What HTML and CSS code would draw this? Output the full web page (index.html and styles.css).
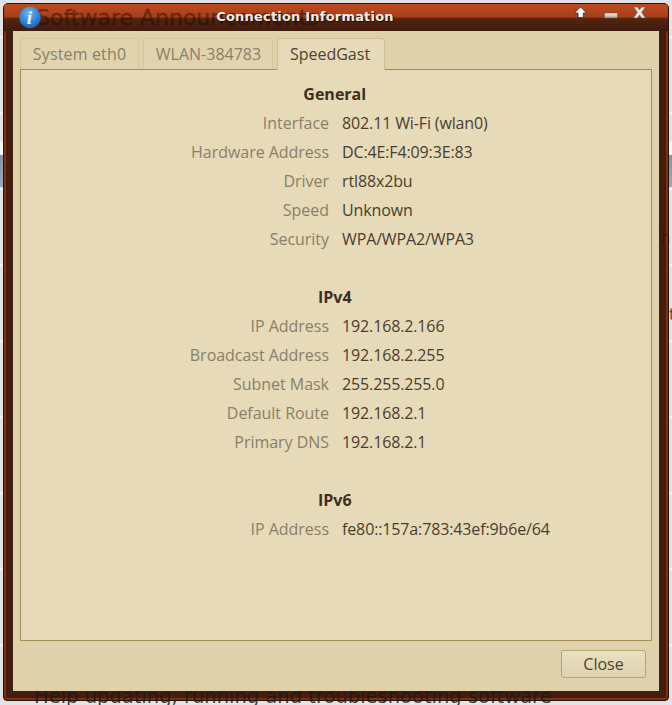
FILE: index.html
```html
<!DOCTYPE html>
<html lang="en">
<head>
<meta charset="utf-8">
<title>Connection Information</title>
<link rel="stylesheet" href="styles.css">
</head>
<body>
<div class="desk-band"></div>
<div class="ghost ghost-top">Software Announcements</div>
<div class="ghost ghost-bottom">Help updating, running and troubleshooting software</div>
<div class="ghost ghost-h">h</div>
<div class="ghost ghost-t">t</div>
<div class="window">
  <header class="titlebar">
    <div class="title-side title-left">
      <svg class="app-icon" width="24" height="24" viewBox="0 0 24 24">
        <defs>
          <radialGradient id="ball" cx="45%" cy="30%" r="75%">
            <stop offset="0" stop-color="#6fb8f0"/>
            <stop offset="0.6" stop-color="#2f84d8"/>
            <stop offset="1" stop-color="#1a58b0"/>
          </radialGradient>
        </defs>
        <circle cx="12" cy="12.500" r="10.700" fill="url(#ball)"/>
        <text x="11.500" y="18.500" text-anchor="middle" class="app-icon-i">i</text>
      </svg>
    </div>
    <h1 class="title">Connection Information</h1>
    <div class="title-side title-right">
      <svg width="15" height="13" viewBox="0 0 15 13" class="wb"><path d="M6.500 .8 12.500 7H9.300v4.500H4.100V7H.5z" fill="#fff" stroke="#2a1a12" stroke-width=".7" stroke-linejoin="round"/></svg>
      <svg width="14" height="13" viewBox="0 0 14 13" class="wb"><defs><linearGradient id="mini" x1="0" y1="0" x2="0" y2="1"><stop offset="0" stop-color="#f2f0ec"/><stop offset="1" stop-color="#a9a5a0"/></linearGradient></defs><rect x=".5" y="7" width="13" height="5" rx=".6" fill="url(#mini)" stroke="#6a4a3a" stroke-width=".5"/></svg>
      <svg width="14" height="13" viewBox="0 0 14 13" class="wb"><path d="M.5 1H4.500L6.500 3.700 8.500 1H12.500L8.700 6.300 12.500 12H8.500L6.500 9 4.500 12H.5L4.300 6.300z" fill="#e8e6e2" stroke="#5a4030" stroke-width=".5"/></svg>
    </div>
  </header>
  <div class="body">
    <div class="tabs">
      <div class="tab tab-system">System eth0</div>
      <div class="tab tab-wlan">WLAN-384783</div>
      <div class="tab tab-speed tab-active">SpeedGast</div>
    </div>
    <main class="panel">
      <div class="info">
        <div class="heading">General</div>
        <div class="label">Interface</div><div class="value">802.11 Wi-Fi (wlan0)</div>
        <div class="label">Hardware Address</div><div class="value">DC:4E:F4:09:3E:83</div>
        <div class="label">Driver</div><div class="value">rtl88x2bu</div>
        <div class="label">Speed</div><div class="value">Unknown</div>
        <div class="label">Security</div><div class="value">WPA/WPA2/WPA3</div>
        <div class="spacer"></div>
        <div class="heading">IPv4</div>
        <div class="label">IP Address</div><div class="value">192.168.2.166</div>
        <div class="label">Broadcast Address</div><div class="value">192.168.2.255</div>
        <div class="label">Subnet Mask</div><div class="value">255.255.255.0</div>
        <div class="label">Default Route</div><div class="value">192.168.2.1</div>
        <div class="label">Primary DNS</div><div class="value">192.168.2.1</div>
        <div class="spacer"></div>
        <div class="heading">IPv6</div>
        <div class="label">IP Address</div><div class="value">fe80::157a:783:43ef:9b6e/64</div>
      </div>
    </main>
    <footer class="actions">
      <button class="close" type="button">Close</button>
    </footer>
  </div>
</div>
</body>
</html>
```
FILE: styles.css
```css
* { box-sizing: border-box; }
html, body { margin: 0; height: 705px; overflow: hidden; }
body {
  background-color: #e3e4e8;
  background-image: repeating-linear-gradient(#e3e4e8 0, #e3e4e8 74px, #f4f4f6 74px, #f4f4f6 76px);
  background-position: 0 -38px;
  font-family: "Open Sans", "Noto Sans", sans-serif;
  position: relative;
  padding: 3px;
}
.desk-band {
  position: absolute;
  left: 0; right: 0; top: 142px; height: 45px;
  background: linear-gradient(#f6f6f6 0, #f6f6f6 13px, #7f93ac 13px, #9aabc0 100%);
}
.ghost {
  position: absolute;
  z-index: 1;
  font-family: "DejaVu Sans", sans-serif;
  white-space: nowrap;
}
.ghost-top {
  left: 36px;
  top: 3px;
  font-size: 22px;
  line-height: 30px;
  font-weight: 400;
  color: rgba(30, 8, 0, 0.42);
  -webkit-text-stroke: 0.5px rgba(30, 8, 0, 0.42);
}
.ghost-bottom {
  left: 34px;
  top: 684px;
  font-size: 19.500px;
  line-height: 26px;
  color: rgba(30, 25, 20, 0.85);
}
.ghost-h { left: 661px; top: 228px; font-size: 15px; line-height: 20px; color: rgba(30, 8, 0, 0.35); }
.ghost-t { left: 669px; top: 305px; font-size: 15px; line-height: 20px; color: #5a4a30; }
.window {
  position: relative;
  width: 666px;
  height: 698px;
  display: flex;
  flex-direction: column;
  background: #431e0e;
  border: 1px solid #2a1108;
  border-radius: 5px 5px 4px 4px;
  box-shadow: inset 0 0 0 2px #7a3214;
  overflow: hidden;
}
.titlebar {
  height: 27px;
  flex: none;
  display: flex;
  align-items: flex-start;
  justify-content: space-between;
  background: linear-gradient(#c04c20 0, #a53f1a 48%, #552510 54%, #3e1a0c 100%);
  position: relative;
}
.title-side { display: flex; position: relative; z-index: 2; }
.title-left { width: 58px; padding: 1px 0 0 14px; }
.title-right { width: 120px; justify-content: flex-end; gap: 15px; padding: 2px 21px 0 0; }
.app-icon-i {
  font-family: "Liberation Serif", serif;
  font-style: italic;
  font-weight: bold;
  font-size: 19px;
  fill: #eef6fd;
}
.title {
  position: relative;
  z-index: 2;
  margin: 4px 0 0;
  font-family: "DejaVu Sans", sans-serif;
  font-size: 13px;
  font-weight: bold;
  line-height: 18px;
  color: #f0ece6;
  text-shadow: 1px 1px 1px #1c0a04;
  letter-spacing: 0.2px;
}
.body {
  position: relative;
  z-index: 2;
  flex: 1;
  margin: 0 9px 9px 9px;
  background: #dfd1ab;
  padding: 7px 7px 0 7px;
  display: flex;
  flex-direction: column;
}
.tabs {
  display: flex;
  gap: 4px;
  height: 32px;
  margin-bottom: -1px;
  position: relative;
  z-index: 1;
  flex: none;
}
.tab {
  font-size: 16px;
  line-height: 31px;
  height: 31px;
  text-align: center;
  color: #8b7f68;
  background: #e0d3ae;
  border: 1px solid #d5c69c;
  border-bottom: 0;
  border-radius: 4px 4px 0 0;
}
.tab-system { width: 119px; letter-spacing: 0.15px; }
.tab-wlan { width: 130px; padding-left: 1px; }
.tab-speed { width: 108px; padding-right: 2px; }
.tab-active {
  height: 32px;
  background: #e6dab9;
  color: #4d4233;
  border-color: #cfbe8e;
}
.panel {
  flex: 1;
  background: #e6dab9;
  border: 1px solid #a48c58;
  min-height: 0;
}
.info {
  display: grid;
  grid-template-columns: 308px 1fr;
  column-gap: 13px;
  grid-auto-rows: 29px;
  padding-top: 10px;
  font-size: 16px;
  line-height: 29px;
}
.heading {
  grid-column: 1 / -1;
  text-align: center;
  font-weight: bold;
  color: #3e2f20;
  padding-right: 2.500px;
}
.spacer { grid-column: 1 / -1; }
.label { text-align: right; color: #8b7f68; letter-spacing: -0.03px; }
.value { color: #4a3e2e; letter-spacing: -0.13px; }
.actions {
  flex: none;
  height: 50px;
  display: flex;
  justify-content: flex-end;
  align-items: flex-start;
  padding: 9px 6px 0 0;
}
.close {
  width: 85px;
  height: 28px;
  padding: 0;
  font: 16px/26px "Open Sans", "Noto Sans", sans-serif;
  color: #4d4233;
  background: linear-gradient(#eadfc2, #dfd2ad);
  border: 1px solid #b7a475;
  border-radius: 3px;
}
```
